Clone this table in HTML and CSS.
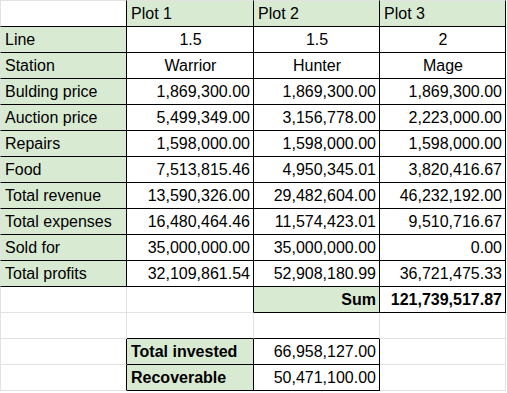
FILE: index.html
```html
<!DOCTYPE html>
<html>
<head>
<meta charset="utf-8">
<link rel="stylesheet" href="styles.css">
</head>
<body>
<table class="sheet">
  <colgroup>
    <col class="c-a"><col class="c-b"><col class="c-c"><col class="c-d">
  </colgroup>
  <tr class="first">
    <td class="br bb"></td>
    <td class="g br bb">Plot 1</td>
    <td class="g br bb">Plot 2</td>
    <td class="g br bb">Plot 3</td>
  </tr>
  <tr>
    <td class="g bl br bb">Line</td>
    <td class="ctr br bb">1.5</td>
    <td class="ctr br bb">1.5</td>
    <td class="ctr br bb">2</td>
  </tr>
  <tr>
    <td class="g bl br bb">Station</td>
    <td class="ctr br bb">Warrior</td>
    <td class="ctr br bb">Hunter</td>
    <td class="ctr br bb">Mage</td>
  </tr>
  <tr>
    <td class="g bl br bb">Bulding price</td>
    <td class="num br bb">1,869,300.00</td>
    <td class="num br bb">1,869,300.00</td>
    <td class="num br bb">1,869,300.00</td>
  </tr>
  <tr>
    <td class="g bl br bb">Auction price</td>
    <td class="num br bb">5,499,349.00</td>
    <td class="num br bb">3,156,778.00</td>
    <td class="num br bb">2,223,000.00</td>
  </tr>
  <tr>
    <td class="g bl br bb">Repairs</td>
    <td class="num br bb">1,598,000.00</td>
    <td class="num br bb">1,598,000.00</td>
    <td class="num br bb">1,598,000.00</td>
  </tr>
  <tr>
    <td class="g bl br bb">Food</td>
    <td class="num br bb">7,513,815.46</td>
    <td class="num br bb">4,950,345.01</td>
    <td class="num br bb">3,820,416.67</td>
  </tr>
  <tr>
    <td class="g bl br bb">Total revenue</td>
    <td class="num br bb">13,590,326.00</td>
    <td class="num br bb">29,482,604.00</td>
    <td class="num br bb">46,232,192.00</td>
  </tr>
  <tr>
    <td class="g bl br bb">Total expenses</td>
    <td class="num br bb">16,480,464.46</td>
    <td class="num br bb">11,574,423.01</td>
    <td class="num br bb">9,510,716.67</td>
  </tr>
  <tr>
    <td class="g bl br bb">Sold for</td>
    <td class="num br bb">35,000,000.00</td>
    <td class="num br bb">35,000,000.00</td>
    <td class="num br bb">0.00</td>
  </tr>
  <tr>
    <td class="g bl br bb">Total profits</td>
    <td class="num br bb">32,109,861.54</td>
    <td class="num br bb">52,908,180.99</td>
    <td class="num br bb">36,721,475.33</td>
  </tr>
  <tr>
    <td></td>
    <td class="br"></td>
    <td class="g num bold br bb">Sum</td>
    <td class="num bold br bb">121,739,517.87</td>
  </tr>
  <tr>
    <td></td>
    <td class="bb"></td>
    <td class="bb"></td>
    <td></td>
  </tr>
  <tr>
    <td class="br"></td>
    <td class="g bold br bb">Total invested</td>
    <td class="num br bb">66,958,127.00</td>
    <td></td>
  </tr>
  <tr>
    <td class="br"></td>
    <td class="g bold br bb">Recoverable</td>
    <td class="num br bb">50,471,100.00</td>
    <td></td>
  </tr>
</table>
</body>
</html>
```

FILE: styles.css
```css
html, body {
  margin: 0;
  padding: 0;
  background: #ffffff;
}

.sheet {
  border-collapse: separate;
  border-spacing: 0;
  table-layout: fixed;
  width: 506px;
  font-family: "Liberation Sans", Arial, sans-serif;
  font-size: 16px;
  color: #000000;
}

.c-a { width: 127px; }
.c-b { width: 127px; }
.c-c { width: 126px; }
.c-d { width: 126px; }

.sheet td {
  box-sizing: border-box;
  padding: 0 3px 0 4px;
  line-height: 25px;
  height: 26px;
  white-space: nowrap;
  overflow: hidden;
  border-right: 1px solid #e2e2e2;
  border-bottom: 1px solid #e2e2e2;
  vertical-align: middle;
  text-align: left;
}

.sheet tr > td:first-child {
  border-left: 1px solid #e2e2e2;
}

.sheet tr.first > td {
  border-top: 1px solid #e2e2e2;
  height: 27px;
}

.sheet td.br { border-right-color: #000000; }
.sheet td.bb { border-bottom-color: #000000; }
.sheet td.bl { border-left-color: #000000; }

.g { background: #d9ead3; }
.ctr { text-align: center !important; }
.num { text-align: right !important; }
.bold { font-weight: bold; }
```
